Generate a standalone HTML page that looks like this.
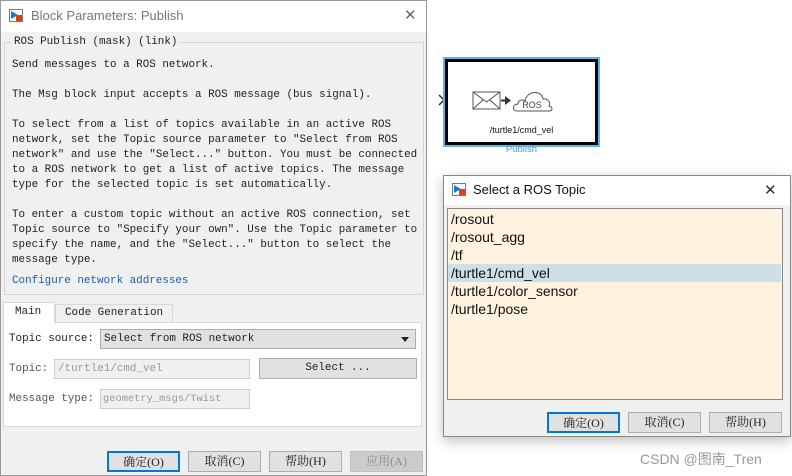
<!DOCTYPE html>
<html><head><meta charset="utf-8"><style>
*{margin:0;padding:0;box-sizing:border-box}
body{width:792px;height:476px;background:#fff;position:relative;overflow:hidden;font-family:"Liberation Mono","Noto Serif CJK SC",monospace;font-size:10.9px;color:#222}
.a{position:absolute}
.mono{font-family:"Liberation Mono","Noto Serif CJK SC",monospace;font-size:10.9px;white-space:pre}
.btn{position:absolute;background:#e1e1e1;border:1px solid #adadad;text-align:center;font-family:"Liberation Serif","Noto Serif CJK SC",serif;font-size:12px;line-height:18px;color:#222}
.sans{font-family:"Liberation Sans","Noto Sans CJK SC",sans-serif}
</style></head><body>
<div class="a" style="left:0;top:0;width:427px;height:476px;background:#f0f0f0;border:1px solid #999"></div>
<div class="a" style="left:1px;top:1px;width:425px;height:31px;background:#fff"></div>
<div class="a" style="left:9px;top:9px;width:14px;height:13px;border:1px solid #777;background:#fff"><div class="a" style="left:1px;top:1px;width:0;height:0;border-left:7px solid #1a7ad0;border-top:4px solid transparent;border-bottom:4px solid transparent"></div><div class="a" style="left:6px;top:5px;width:6px;height:6px;background:#e04010"></div></div>
<div class="a sans" style="left:31px;top:8px;font-size:13px;color:#777">Block Parameters: Publish</div>
<div class="a sans" style="left:404px;top:6px;font-size:15px;color:#666">✕</div>
<div class="a" style="left:4px;top:42px;width:420px;height:253px;border:1px solid #d5d5d5"></div>
<div class="a mono" style="left:12px;top:35px;background:#f0f0f0;padding:0 2px;line-height:15px">ROS Publish (mask) (link)</div>
<div class="a mono" style="left:12px;top:58px;line-height:15px">Send messages to a ROS network.

The Msg block input accepts a ROS message (bus signal).

To select from a list of topics available in an active ROS
network, set the Topic source parameter to "Select from ROS
network" and use the "Select..." button. You must be connected
to a ROS network to get a list of active topics. The message
type for the selected topic is set automatically.

To enter a custom topic without an active ROS connection, set
Topic source to "Specify your own". Use the Topic parameter to
specify the name, and the "Select..." button to select the
message type.</div>
<div class="a mono" style="left:12px;top:274px;color:#1a5fa8;line-height:15px">Configure network addresses</div>
<div class="a" style="left:55px;top:304px;width:118px;height:19px;border:1px solid #d9d9d9;background:#f0f0f0"></div>
<div class="a mono" style="left:65px;top:307px">Code Generation</div>
<div class="a" style="left:3px;top:322px;width:419px;height:105px;background:#fff;border:1px solid #d9d9d9"></div>
<div class="a" style="left:3px;top:302px;width:52px;height:22px;background:#fff;border:1px solid #d9d9d9;border-bottom:none"></div>
<div class="a mono" style="left:15px;top:306px">Main</div>
<div class="a mono" style="left:9px;top:333px">Topic source:</div>
<div class="a" style="left:100px;top:329px;width:316px;height:20px;background:#e1e1e1;border:1px solid #adadad"></div>
<div class="a mono" style="left:104px;top:333px">Select from ROS network</div>
<div class="a" style="left:401px;top:337px;border-top:5px solid #222;border-left:4px solid transparent;border-right:4px solid transparent"></div>
<div class="a mono" style="left:9px;top:363px;color:#555">Topic:</div>
<div class="a" style="left:54px;top:359px;width:196px;height:20px;background:#f0f0f0;border:1px solid #ccc"></div>
<div class="a mono" style="left:58px;top:363px;color:#999">/turtle1/cmd_vel</div>
<div class="btn" style="left:259px;top:358px;width:158px;height:21px;line-height:19px;font-family:'Liberation Mono',monospace;font-size:10.9px">Select ...</div>
<div class="a mono" style="left:9px;top:393px;color:#555">Message type:</div>
<div class="a" style="left:100px;top:389px;width:150px;height:20px;background:#f0f0f0;border:1px solid #ccc"></div>
<div class="a mono" style="left:103px;top:393px;color:#999;font-size:10.4px">geometry_msgs/Twist</div>
<div class="btn" style="left:107px;top:451px;width:73px;height:21px;border:2px solid #0078d7">确定(O)</div>
<div class="btn" style="left:188px;top:451px;width:73px;height:21px">取消(C)</div>
<div class="btn" style="left:269px;top:451px;width:73px;height:21px">帮助(H)</div>
<div class="btn" style="left:350px;top:451px;width:73px;height:21px;background:#ccc;border-color:#bfbfbf;color:#888">应用(A)</div>
<svg class="a" style="left:438px;top:94px" width="8" height="14"><path d="M1 1 L6 6 L1 11" fill="none" stroke="#234" stroke-width="1.5"/></svg>
<div class="a" style="left:443px;top:57px;width:157px;height:90px;border:2px solid #5ab4ee"></div>
<div class="a" style="left:445px;top:59px;width:153px;height:86px;border:3px solid #000;background:#fff"></div>
<svg class="a" style="left:470px;top:86px" width="92" height="28" viewBox="0 0 92 28"><rect x="3" y="6" width="27" height="17" fill="#fff" stroke="#555"/><path d="M3 6 L16.5 16 L30 6 M3 23 L13 14 M30 23 L20 14" fill="none" stroke="#555"/><path d="M31 14.5h5" stroke="#333" stroke-width="2"/><path d="M35 10 L41 14.5 L35 19Z" fill="#333"/><path d="M47 25 C42 25 42 18 48 18 C48 14 53 13 55 15 C57 4 72 4 73 13 C78 12 81 17 79 20 C83 21 83 25 79 25 Z" fill="#fff" stroke="#555"/><text x="62" y="22" font-family="Liberation Sans" font-size="9" text-anchor="middle" fill="#444">ROS</text></svg>
<div class="a sans" style="left:445px;top:125px;width:153px;text-align:center;font-size:9px;color:#111">/turtle1/cmd_vel</div>
<div class="a sans" style="left:445px;top:144px;width:153px;text-align:center;font-size:9.5px;color:#3aa0e8">Publish</div>
<div class="a" style="left:443px;top:175px;width:348px;height:262px;background:#f0f0f0;border:1px solid #888;box-shadow:0 4px 12px rgba(0,0,0,.25)"></div>
<div class="a" style="left:444px;top:176px;width:346px;height:29px;background:#fff"></div>
<div class="a" style="left:452px;top:183px;width:14px;height:13px;border:1px solid #777;background:#fff"><div class="a" style="left:1px;top:1px;width:0;height:0;border-left:7px solid #1a7ad0;border-top:4px solid transparent;border-bottom:4px solid transparent"></div><div class="a" style="left:6px;top:5px;width:6px;height:6px;background:#e04010"></div></div>
<div class="a sans" style="left:473px;top:182px;font-size:13px;color:#111">Select a ROS Topic</div>
<div class="a sans" style="left:764px;top:181px;font-size:15px;color:#333">✕</div>
<div class="a" style="left:447px;top:208px;width:336px;height:192px;background:#fff3e0;border:1px solid #888"></div>
<div class="a" style="left:448px;top:264px;width:333px;height:18px;background:#cddfe7"></div>
<div class="a sans" style="left:451px;top:210px;font-size:14px;line-height:18px;color:#111">/rosout<br>/rosout_agg<br>/tf<br>/turtle1/cmd_vel<br>/turtle1/color_sensor<br>/turtle1/pose</div>
<div class="btn" style="left:547px;top:412px;width:73px;height:21px;border:2px solid #0078d7">确定(O)</div>
<div class="btn" style="left:628px;top:412px;width:73px;height:21px">取消(C)</div>
<div class="btn" style="left:709px;top:412px;width:73px;height:21px">帮助(H)</div>
<div class="a sans" style="left:640px;top:449px;font-size:14px;color:#999">CSDN @图南_Tren</div>
</body></html>
